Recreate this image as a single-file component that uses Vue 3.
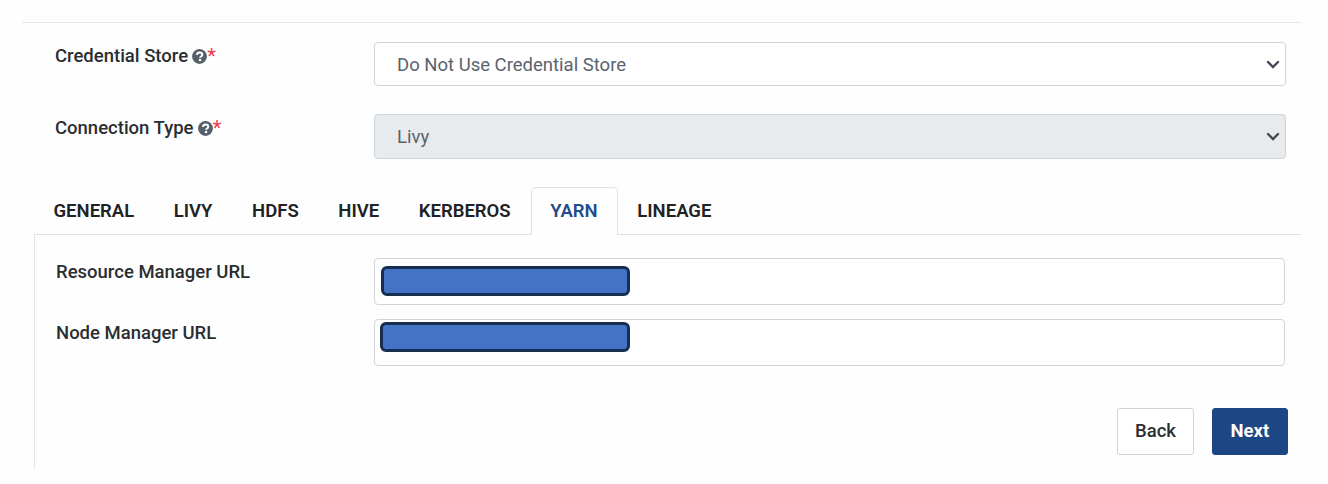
<script setup>
const selects = [
  { label: 'Credential Store', value: 'Do Not Use Credential Store', disabled: false },
  { label: 'Connection Type', value: 'Livy', disabled: true },
]
const tabs = ['GENERAL', 'LIVY', 'HDFS', 'HIVE', 'KERBEROS', 'YARN', 'LINEAGE']
const active = 'YARN'
const fields = ['Resource Manager URL', 'Node Manager URL']
</script>

<template>
  <main class="page">
    <section class="top">
      <div v-for="s in selects" :key="s.label" class="row" :class="{ disabled: s.disabled }">
        <div class="label">
          <span class="label-text">{{ s.label }}</span>
          <svg class="help" viewBox="0 0 512 512">
            <circle cx="256" cy="256" r="252" fill="#56606b" />
            <path d="M166 200c6-54 42-84 93-84 53 0 92 31 92 77 0 61-75 60-75 106" fill="none" stroke="#fff" stroke-width="68" />
            <circle cx="274" cy="374" r="44" fill="#fff" />
          </svg>
          <span class="star">*</span>
        </div>
        <div class="select">
          <span>{{ s.value }}</span>
          <svg class="chevron" viewBox="0 0 14 10">
            <path d="M2 2l5 5 5-5" fill="none" stroke="#414a54" stroke-width="2.4" stroke-linecap="round" stroke-linejoin="miter" />
          </svg>
        </div>
      </div>
    </section>
    <nav class="tabs">
      <div v-for="t in tabs" :key="t" class="tab" :class="{ active: t === active }"><span>{{ t }}</span></div>
    </nav>
    <section class="panel">
      <div v-for="f in fields" :key="f" class="field">
        <div class="field-label"><span>{{ f }}</span></div>
        <div class="input"><div class="mask"></div></div>
      </div>
      <div class="actions">
        <button class="btn back"><span>Back</span></button>
        <button class="btn next"><span>Next</span></button>
      </div>
    </section>
  </main>
</template>

<style>
body { background: #fefefe; }
</style>

<style scoped>
* { box-sizing: border-box; }
.page {
  height: 484px;
  padding-top: 22px;
  font-family: Roboto, "Liberation Sans", sans-serif;
  font-size: 18.5px;
  color: #2b2e31;
  overflow: hidden;
}
.top {
  margin-left: 22px;
  width: 1279px;
  height: 165px;
  border-top: 1px solid #e4e8eb;
  padding: 19px 15px 0 33px;
}
.row { display: flex; height: 72px; }
.label {
  width: 319px;
  height: 28px;
  display: flex;
  align-items: center;
  font-weight: 500;
}
.label-text { margin-top: -1px; }
.help { width: 15px; height: 15px; margin-left: 4.2px; }
.star { color: #ee3c50; font-weight: 400; font-size: 20px; }
.select {
  flex: 1;
  height: 44px;
  border: 1px solid #ced4da;
  border-radius: 4px;
  display: flex;
  align-items: center;
  justify-content: space-between;
  padding: 1px 5px 0 22px;
  color: #5a636c;
  background: #fff;
}
.disabled .select { height: 45px; padding-top: 0; background: #e8ebee; }
.chevron { width: 14px; height: 10px; }
.tabs {
  display: flex;
  margin-left: 34px;
  width: 1267px;
  height: 48px;
  border-bottom: 1px solid #dee2e6;
}
.tab {
  height: 48px;
  padding: 0 19.1px 2px 18.5px;
  border: 1px solid transparent;
  border-bottom: 0;
  border-radius: 5px 5px 0 0;
  display: flex;
  align-items: center;
  font-weight: 600;
  color: #202224;
}
.tab.active { color: #234c8b; background: #fefefe; border-color: #dee2e6; }
.panel {
  margin-left: 34px;
  width: 1267px;
  height: 234px;
  border-left: 1px solid #e2e6ea;
  padding: 23px 16px 0 21px;
}
.field { display: flex; height: 60.5px; }
.field-label { width: 318px; padding-top: 4px; line-height: 21px; font-weight: 500; }
.input {
  flex: 1;
  height: 47px;
  border: 1px solid #ced4da;
  border-radius: 4px;
  padding: 7px 6px;
  background: #fff;
}
.mask {
  width: 249px;
  height: 30px;
  border: 3px solid #172d51;
  border-radius: 6px;
  background: #4472c4;
}
.field:nth-child(2) .input { padding: 2.5px 5px; }
.field:nth-child(2) .mask { width: 250px; }
.actions {
  display: flex;
  justify-content: flex-end;
  gap: 18px;
  margin: 29px -2.6px 0 0;
}
.btn {
  height: 47.4px;
  padding: 0 0 2px;
  border-radius: 3px;
  font: 500 18.5px Roboto, sans-serif;
}
.back { width: 77.1px; border: 1px solid #ced4da; background: #fff; color: #2b2e31; }
.next { width: 75.5px; border: 1px solid #1d4684; background: #1d4684; color: #fff; font-weight: 700; }
</style>
